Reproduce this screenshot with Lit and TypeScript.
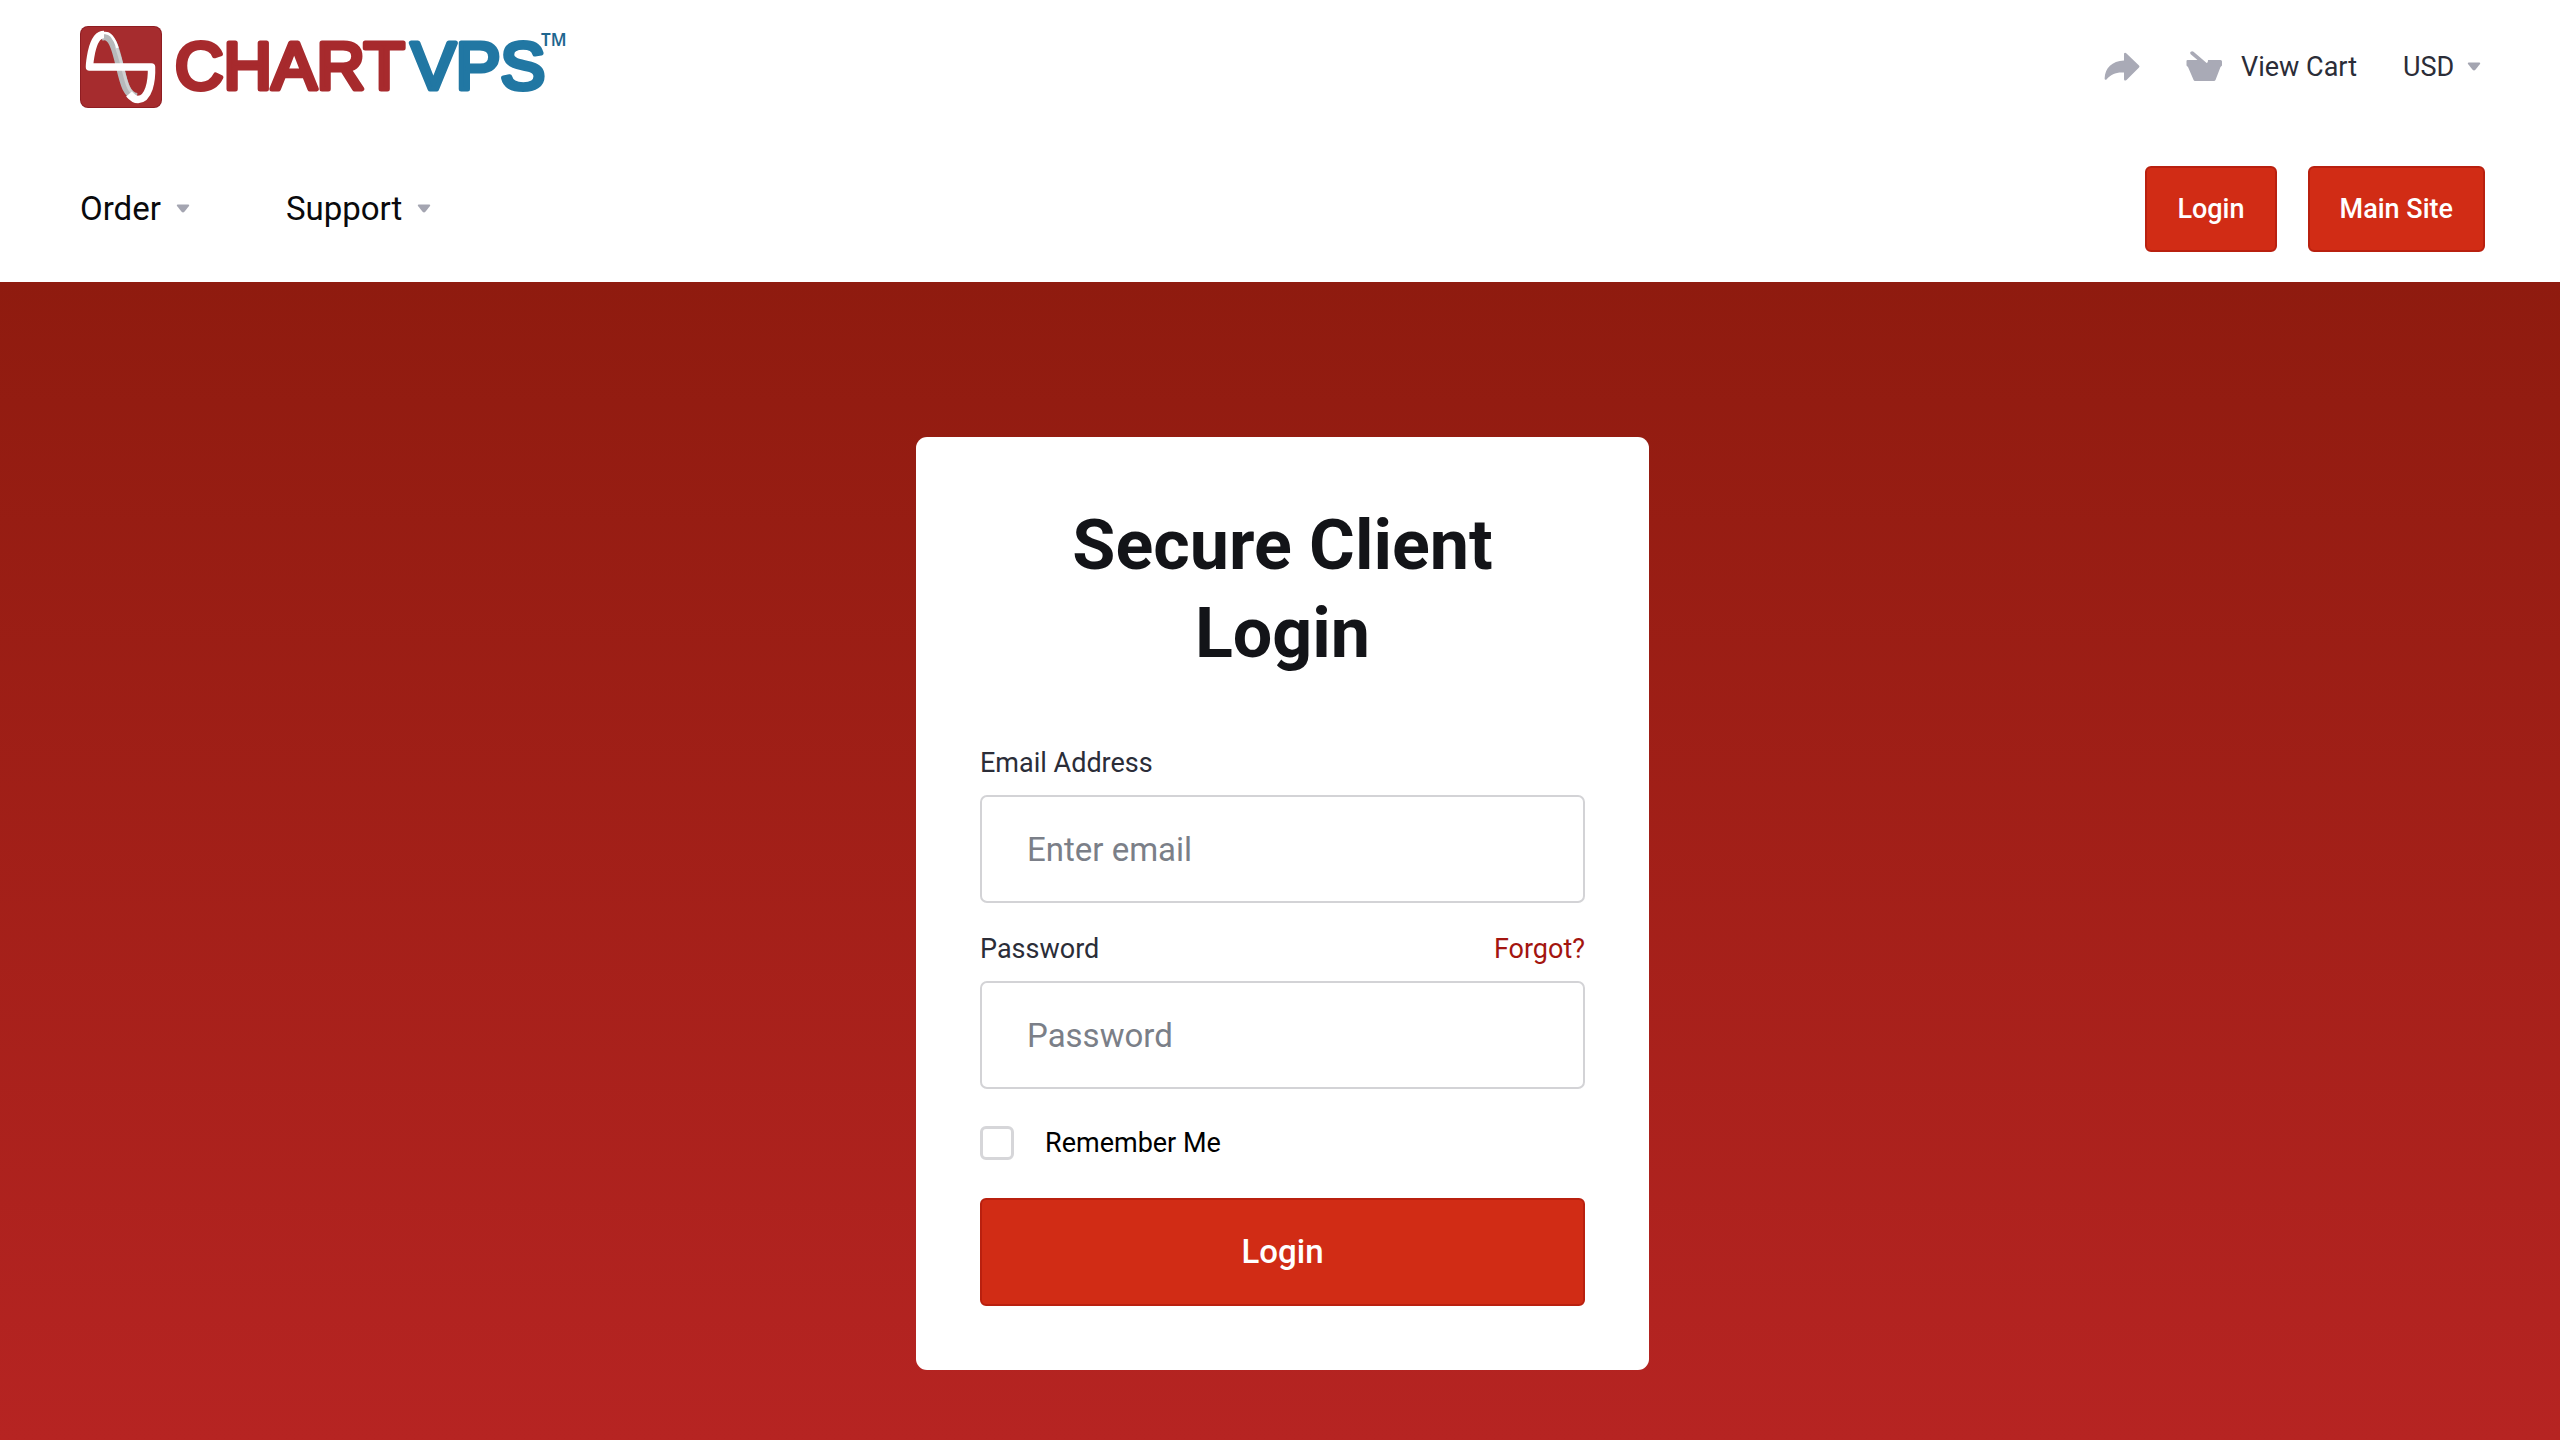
import { LitElement, html, css, svg } from "lit";
import { customElement } from "lit/decorators.js";

const caret = html`<svg class="caret" viewBox="0 0 14 9" aria-hidden="true">
  <path d="M1.6 0.5h10.8q1.4 0.2 0.6 1.5L8.4 7.8q-1.4 1.2-2.8 0L1 2Q0.2 0.7 1.6 0.5z" />
</svg>`;

const logoMark = svg`
  <rect x="0" y="0" width="82" height="82" rx="8" fill="#8f1d22" />
  <rect x="1" y="1" width="80" height="80" rx="7" fill="#a62c2e" />
  <path d="M21 11C32 6 36 24 40 41C44 58 47 70 57 71" fill="none" stroke="#b7b9bb" stroke-width="8" />
  <path d="M36 20C39 28 40.500 34 42.500 41C46 56 48 64 54 68.500" fill="none" stroke="#cfd1d2" stroke-width="3" />
  <path d="M17 12C20 6.500 27 5 31.500 10C34 13 36 17 37.500 22" fill="none" stroke="#fff" stroke-width="2.500" />
  <path d="M24 8.500C17 8.500 13.500 17 11.500 26C10.500 31 9.500 36 9.500 41H71.500C72 55 69 73 58 73.500C54 73.500 51.500 71 49 68"
    fill="none" stroke="#fff" stroke-width="7.500" stroke-linejoin="round" />
`;

@customElement("app-root")
export class AppRoot extends LitElement {
  static styles = css`
    :host {
      display: flex;
      flex-direction: column;
      min-height: 100vh;
      background: #fff;
      color: #000;
      font-family: Roboto, "Liberation Sans", sans-serif;
      font-size: 27px;
      line-height: 40px;
    }
    *,
    *::before {
      box-sizing: border-box;
    }
    button,
    input,
    select {
      font: inherit;
      margin: 0;
    }
    a {
      text-decoration: none;
      color: inherit;
    }
    .bar {
      display: flex;
      align-items: center;
      justify-content: space-between;
      padding: 0 75px 0 80px;
    }
    .top {
      height: 133px;
      color: #2b2d38;
    }
    .nav {
      height: 149px;
      padding-top: 2px;
    }
    .logo {
      display: block;
    }
    .logo svg {
      display: block;
      width: 488px;
      height: 82px;
    }
    .wordmark {
      font-family: "Liberation Sans", Arial, sans-serif;
      font-size: 67px;
      stroke-width: 5px;
      stroke-linejoin: round;
      stroke-linecap: round;
    }
    .chart {
      fill: #a72a2d;
      stroke: #a72a2d;
    }
    .vps {
      fill: #2177a3;
      stroke: #2177a3;
    }
    .tm {
      font-family: "Noto Sans", sans-serif;
      font-size: 17px;
      font-weight: 600;
      fill: #1f668f;
    }
    .tools,
    .menu,
    .actions {
      display: flex;
      align-items: center;
    }
    .tools {
      gap: 46px;
    }
    .icon-button {
      display: flex;
      padding: 0;
      border: 0;
      background: none;
      cursor: pointer;
    }
    .icon {
      width: 36px;
      height: 32px;
      fill: #a9aab6;
    }
    .cart {
      display: flex;
      align-items: center;
      gap: 19px;
    }
    .currency {
      display: flex;
      align-items: center;
      gap: 12px;
      padding-right: 4px;
    }
    .currency select {
      appearance: none;
      border: 0;
      padding: 0;
      background: none;
      color: inherit;
    }
    .caret {
      width: 14px;
      height: 9px;
      flex: none;
      fill: #a4a5b1;
    }
    .menu {
      gap: 96px;
    }
    .menu button {
      display: flex;
      align-items: center;
      gap: 15px;
      border: 0;
      padding: 0;
      background: none;
      color: #0a0a0c;
      font-size: 33px;
      cursor: pointer;
    }
    .actions {
      gap: 31px;
    }
    .btn {
      display: block;
      border: 2px solid #b9200f;
      border-radius: 6px;
      background: #d12c15;
      color: #fff;
      font-weight: 500;
      text-align: center;
      cursor: pointer;
    }
    .actions .btn {
      padding: 21px 30px;
    }
    .hero {
      flex: 1;
      display: flex;
      justify-content: center;
      align-items: flex-start;
      padding: 155px 32px 64px 37px;
      background: linear-gradient(#8f1b0f, #b62422);
    }
    .card {
      width: 100%;
      max-width: 733px;
      padding: 64px;
      border-radius: 11px;
      background: #fff;
    }
    h1 {
      margin: 0 0 66px;
      color: #131418;
      font-size: 70px;
      line-height: 88px;
      font-weight: 700;
      text-align: center;
    }
    .label-row {
      display: flex;
      justify-content: space-between;
      margin-bottom: 12px;
      color: #2b2d38;
    }
    .forgot {
      color: #a3150f;
    }
    .field {
      display: block;
      width: 100%;
      height: 108px;
      margin-bottom: 26px;
      padding: 0 45px;
      border: 2px solid #d3d3d6;
      border-radius: 7px;
      background: #fff;
      font-size: 33px;
      outline: none;
    }
    .field::placeholder {
      color: #7b7f88;
      opacity: 1;
    }
    .remember {
      display: flex;
      align-items: center;
      gap: 31px;
      margin: 34px 0 35px;
    }
    .remember input {
      appearance: none;
      width: 34px;
      height: 34px;
      border: 3px solid #d6d6d9;
      border-radius: 6px;
      background: #fff;
    }
    .remember input:checked {
      background: #d12c15;
    }
    .submit {
      width: 100%;
      height: 108px;
      font-size: 33px;
    }
  `;

  render() {
    return html`
      <header>
        <div class="bar top">
          <a class="logo" href="#" aria-label="ChartVPS">
            <svg viewBox="0 0 488 82">
              ${logoMark}
              <text class="wordmark chart" x="95" y="63">CHART</text>
              <text class="wordmark vps" x="331" y="63">VPS</text>
              <text class="tm" x="461" y="20">TM</text>
            </svg>
          </a>
          <div class="tools">
            <button class="icon-button" aria-label="Share">
              <svg class="icon" viewBox="0 0 36 32">
                <path d="M20 2.500q1-1.500 2.500 0L35 14.500q1 1 0 2L22.500 29Q20 30.500 20 28V21.500C12 21 7 23 2.500 28.500Q0.800 29.500 0.600 27.500C1 17 8 10 20 9.500z" />
              </svg>
            </button>
            <a class="cart" href="#">
              <svg class="icon" viewBox="0 0 36 32">
                <path d="M1.500 9H11.500L4.700 3.300Q3.600 1.600 4.800 0.700Q6.200-0.400 7.500 0.700L19.500 11Q22 13.500 22 9H34.500Q36 9 36 10.500V14.500L34.500 16L29.500 29Q29 30 28 30H9Q8 30 7.600 29L2 16L0.500 14.500V10Q0.500 9 1.500 9z" />
              </svg>
              <span>View Cart</span>
            </a>
            <label class="currency">
              <select aria-label="Currency"><option>USD</option></select>
              ${caret}
            </label>
          </div>
        </div>
        <nav class="bar nav">
          <div class="menu">
            <button>Order ${caret}</button>
            <button>Support ${caret}</button>
          </div>
          <div class="actions">
            <a class="btn" href="#">Login</a>
            <a class="btn" href="#">Main Site</a>
          </div>
        </nav>
      </header>
      <main class="hero">
        <form class="card">
          <h1>Secure Client<br />Login</h1>
          <div class="label-row"><label for="email">Email Address</label></div>
          <input class="field" id="email" type="email" placeholder="Enter email" />
          <div class="label-row">
            <label for="password">Password</label>
            <a class="forgot" href="#">Forgot?</a>
          </div>
          <input class="field" id="password" type="password" placeholder="Password" />
          <label class="remember"><input type="checkbox" /><span>Remember Me</span></label>
          <button class="btn submit" type="button">Login</button>
        </form>
      </main>
    `;
  }
}
